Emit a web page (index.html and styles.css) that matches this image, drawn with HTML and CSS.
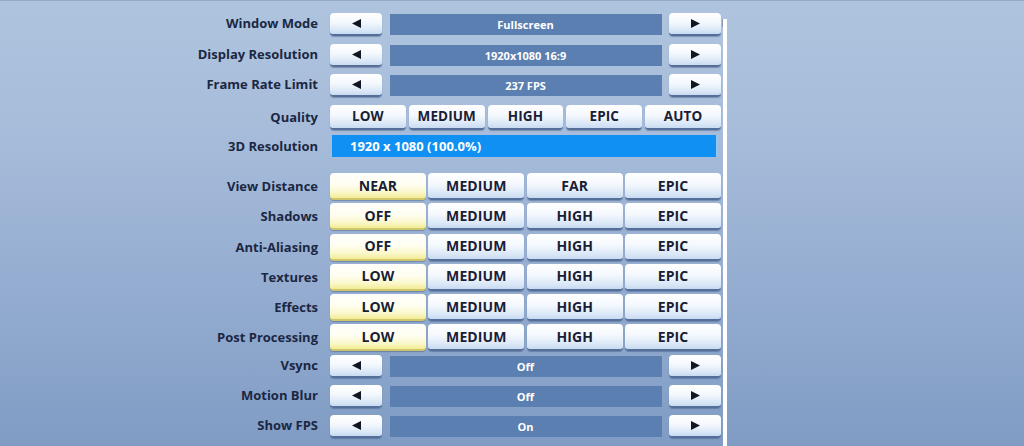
FILE: index.html
```html
<!DOCTYPE html>
<html>
<head>
<meta charset="utf-8">
<link rel="stylesheet" href="styles.css">
</head>
<body>
<div class="screen">
  <div class="settings">
    <div class="row top">
      <div class="label">Window Mode</div>
      <div class="stepper">
        <div class="btn arrow"><svg width="9" height="9" viewBox="0 0 9 9"><polygon points="9,0 9,9 0,4.5"/></svg></div>
        <div class="value">Fullscreen</div>
        <div class="btn arrow"><svg width="9" height="9" viewBox="0 0 9 9"><polygon points="0,0 0,9 9,4.5"/></svg></div>
      </div>
    </div>
    <div class="row top">
      <div class="label">Display Resolution</div>
      <div class="stepper">
        <div class="btn arrow"><svg width="9" height="9" viewBox="0 0 9 9"><polygon points="9,0 9,9 0,4.5"/></svg></div>
        <div class="value">1920x1080 16:9</div>
        <div class="btn arrow"><svg width="9" height="9" viewBox="0 0 9 9"><polygon points="0,0 0,9 9,4.5"/></svg></div>
      </div>
    </div>
    <div class="row top">
      <div class="label">Frame Rate Limit</div>
      <div class="stepper">
        <div class="btn arrow"><svg width="9" height="9" viewBox="0 0 9 9"><polygon points="9,0 9,9 0,4.5"/></svg></div>
        <div class="value">237 FPS</div>
        <div class="btn arrow"><svg width="9" height="9" viewBox="0 0 9 9"><polygon points="0,0 0,9 9,4.5"/></svg></div>
      </div>
    </div>
    <div class="row top">
      <div class="label quality-label">Quality</div>
      <div class="seg5">
        <div class="btn opt q">LOW</div>
        <div class="btn opt q">MEDIUM</div>
        <div class="btn opt q">HIGH</div>
        <div class="btn opt q">EPIC</div>
        <div class="btn opt q">AUTO</div>
      </div>
    </div>
    <div class="row res-row">
      <div class="label res-label">3D Resolution</div>
      <div class="resbar">1920 x 1080 (100.0%)</div>
    </div>
    <div class="row bottom">
      <div class="label big">View Distance</div>
      <div class="seg4">
        <div class="btn opt sel">NEAR</div>
        <div class="btn opt">MEDIUM</div>
        <div class="btn opt">FAR</div>
        <div class="btn opt">EPIC</div>
      </div>
    </div>
    <div class="row bottom">
      <div class="label big">Shadows</div>
      <div class="seg4">
        <div class="btn opt sel">OFF</div>
        <div class="btn opt">MEDIUM</div>
        <div class="btn opt">HIGH</div>
        <div class="btn opt">EPIC</div>
      </div>
    </div>
    <div class="row bottom">
      <div class="label big">Anti-Aliasing</div>
      <div class="seg4">
        <div class="btn opt sel">OFF</div>
        <div class="btn opt">MEDIUM</div>
        <div class="btn opt">HIGH</div>
        <div class="btn opt">EPIC</div>
      </div>
    </div>
    <div class="row bottom">
      <div class="label big">Textures</div>
      <div class="seg4">
        <div class="btn opt sel">LOW</div>
        <div class="btn opt">MEDIUM</div>
        <div class="btn opt">HIGH</div>
        <div class="btn opt">EPIC</div>
      </div>
    </div>
    <div class="row bottom">
      <div class="label big">Effects</div>
      <div class="seg4">
        <div class="btn opt sel">LOW</div>
        <div class="btn opt">MEDIUM</div>
        <div class="btn opt">HIGH</div>
        <div class="btn opt">EPIC</div>
      </div>
    </div>
    <div class="row bottom">
      <div class="label big">Post Processing</div>
      <div class="seg4">
        <div class="btn opt sel">LOW</div>
        <div class="btn opt">MEDIUM</div>
        <div class="btn opt">HIGH</div>
        <div class="btn opt">EPIC</div>
      </div>
    </div>
    <div class="row bottom">
      <div class="label">Vsync</div>
      <div class="stepper">
        <div class="btn arrow"><svg width="9" height="9" viewBox="0 0 9 9"><polygon points="9,0 9,9 0,4.5"/></svg></div>
        <div class="value">Off</div>
        <div class="btn arrow"><svg width="9" height="9" viewBox="0 0 9 9"><polygon points="0,0 0,9 9,4.5"/></svg></div>
      </div>
    </div>
    <div class="row bottom">
      <div class="label">Motion Blur</div>
      <div class="stepper">
        <div class="btn arrow"><svg width="9" height="9" viewBox="0 0 9 9"><polygon points="9,0 9,9 0,4.5"/></svg></div>
        <div class="value">Off</div>
        <div class="btn arrow"><svg width="9" height="9" viewBox="0 0 9 9"><polygon points="0,0 0,9 9,4.5"/></svg></div>
      </div>
    </div>
    <div class="row bottom">
      <div class="label">Show FPS</div>
      <div class="stepper">
        <div class="btn arrow"><svg width="9" height="9" viewBox="0 0 9 9"><polygon points="9,0 9,9 0,4.5"/></svg></div>
        <div class="value">On</div>
        <div class="btn arrow"><svg width="9" height="9" viewBox="0 0 9 9"><polygon points="0,0 0,9 9,4.5"/></svg></div>
      </div>
    </div>
  </div>
  <div class="scrollbar"><div class="thumb"></div></div>
</div>
</body>
</html>
```

FILE: styles.css
```css
html, body {
  margin: 0;
  padding: 0;
}
body {
  width: 1024px;
  height: 446px;
  overflow: hidden;
  font-family: "Open Sans", "Noto Sans", sans-serif;
}
.screen {
  height: 446px;
  box-sizing: border-box;
  padding-left: 180px;
  padding-top: 13px;
  display: flex;
  align-items: flex-start;
  background: linear-gradient(180deg, #aec4de 0%, #a6bcda 30%, #94acd0 65%, #809cc4 100%);
  border-top: 1px solid #93aacb;
}
.settings {
  width: 541px;
  display: flex;
  flex-direction: column;
  margin-top: -1px;
}
.row {
  display: grid;
  grid-template-columns: 138px 391px;
  column-gap: 12px;
  align-items: start;
}
.row.top { height: 30.5px; }
.row.res-row { height: 38px; }
.row.bottom { height: 30.25px; }
.label {
  text-align: right;
  font-weight: 700;
  font-size: 13px;
  color: #1b2742;
  line-height: 21px;
  white-space: nowrap;
}
.label.quality-label { line-height: 24px; }
.label.res-label { line-height: 22px; }
.label.big { line-height: 26px; }
.stepper {
  display: grid;
  grid-template-columns: 52px 1fr 52px;
  column-gap: 7.5px;
}
.btn {
  box-sizing: border-box;
  border-radius: 4px;
  background: linear-gradient(180deg, #ffffff 0%, #f4f8fd 45%, #dbe8f7 80%, #c9dbf1 100%);
  border-bottom: 2px solid #546f99;
  box-shadow: 0 1px 1px rgba(40, 60, 100, 0.35);
  display: flex;
  align-items: center;
  justify-content: center;
  color: #1a2034;
  font-weight: 700;
}
.arrow {
  height: 23px;
}
.arrow svg polygon { fill: #111622; }
.value {
  height: 21px;
  margin-top: 1px;
  background: #5b7fb0;
  color: #ffffff;
  font-weight: 700;
  font-size: 11px;
  display: flex;
  align-items: center;
  justify-content: center;
}
.seg5 {
  display: grid;
  grid-template-columns: repeat(5, 1fr);
  column-gap: 3px;
}
.seg4 {
  display: grid;
  grid-template-columns: repeat(4, 1fr);
  column-gap: 2.5px;
}
.opt {
  height: 27px;
  font-size: 14px;
  letter-spacing: 0.1px;
  padding-bottom: 1px;
}
.opt.q {
  height: 25px;
  font-size: 13.5px;
}
.opt.sel {
  background: linear-gradient(180deg, #fffffb 0%, #fffef2 45%, #fbf8cf 75%, #f2ec94 100%);
  border-bottom: 2px solid #cfc56a;
}
.resbar {
  margin-left: 2px;
  width: 386px;
  height: 22px;
  box-sizing: border-box;
  background: #1190f3;
  border-right: 2px solid #8ec8f7;
  color: #ffffff;
  font-weight: 700;
  font-size: 13px;
  padding-left: 18px;
  display: flex;
  align-items: center;
}
.scrollbar {
  width: 4px;
  margin-left: 2px;
  margin-top: 5px;
  height: 440px;
  background: #ffffff;
  position: relative;
}
.thumb {
  position: absolute;
  left: -1px;
  top: 0;
  width: 1px;
  height: 8px;
  background: #8c9bb3;
}
```
